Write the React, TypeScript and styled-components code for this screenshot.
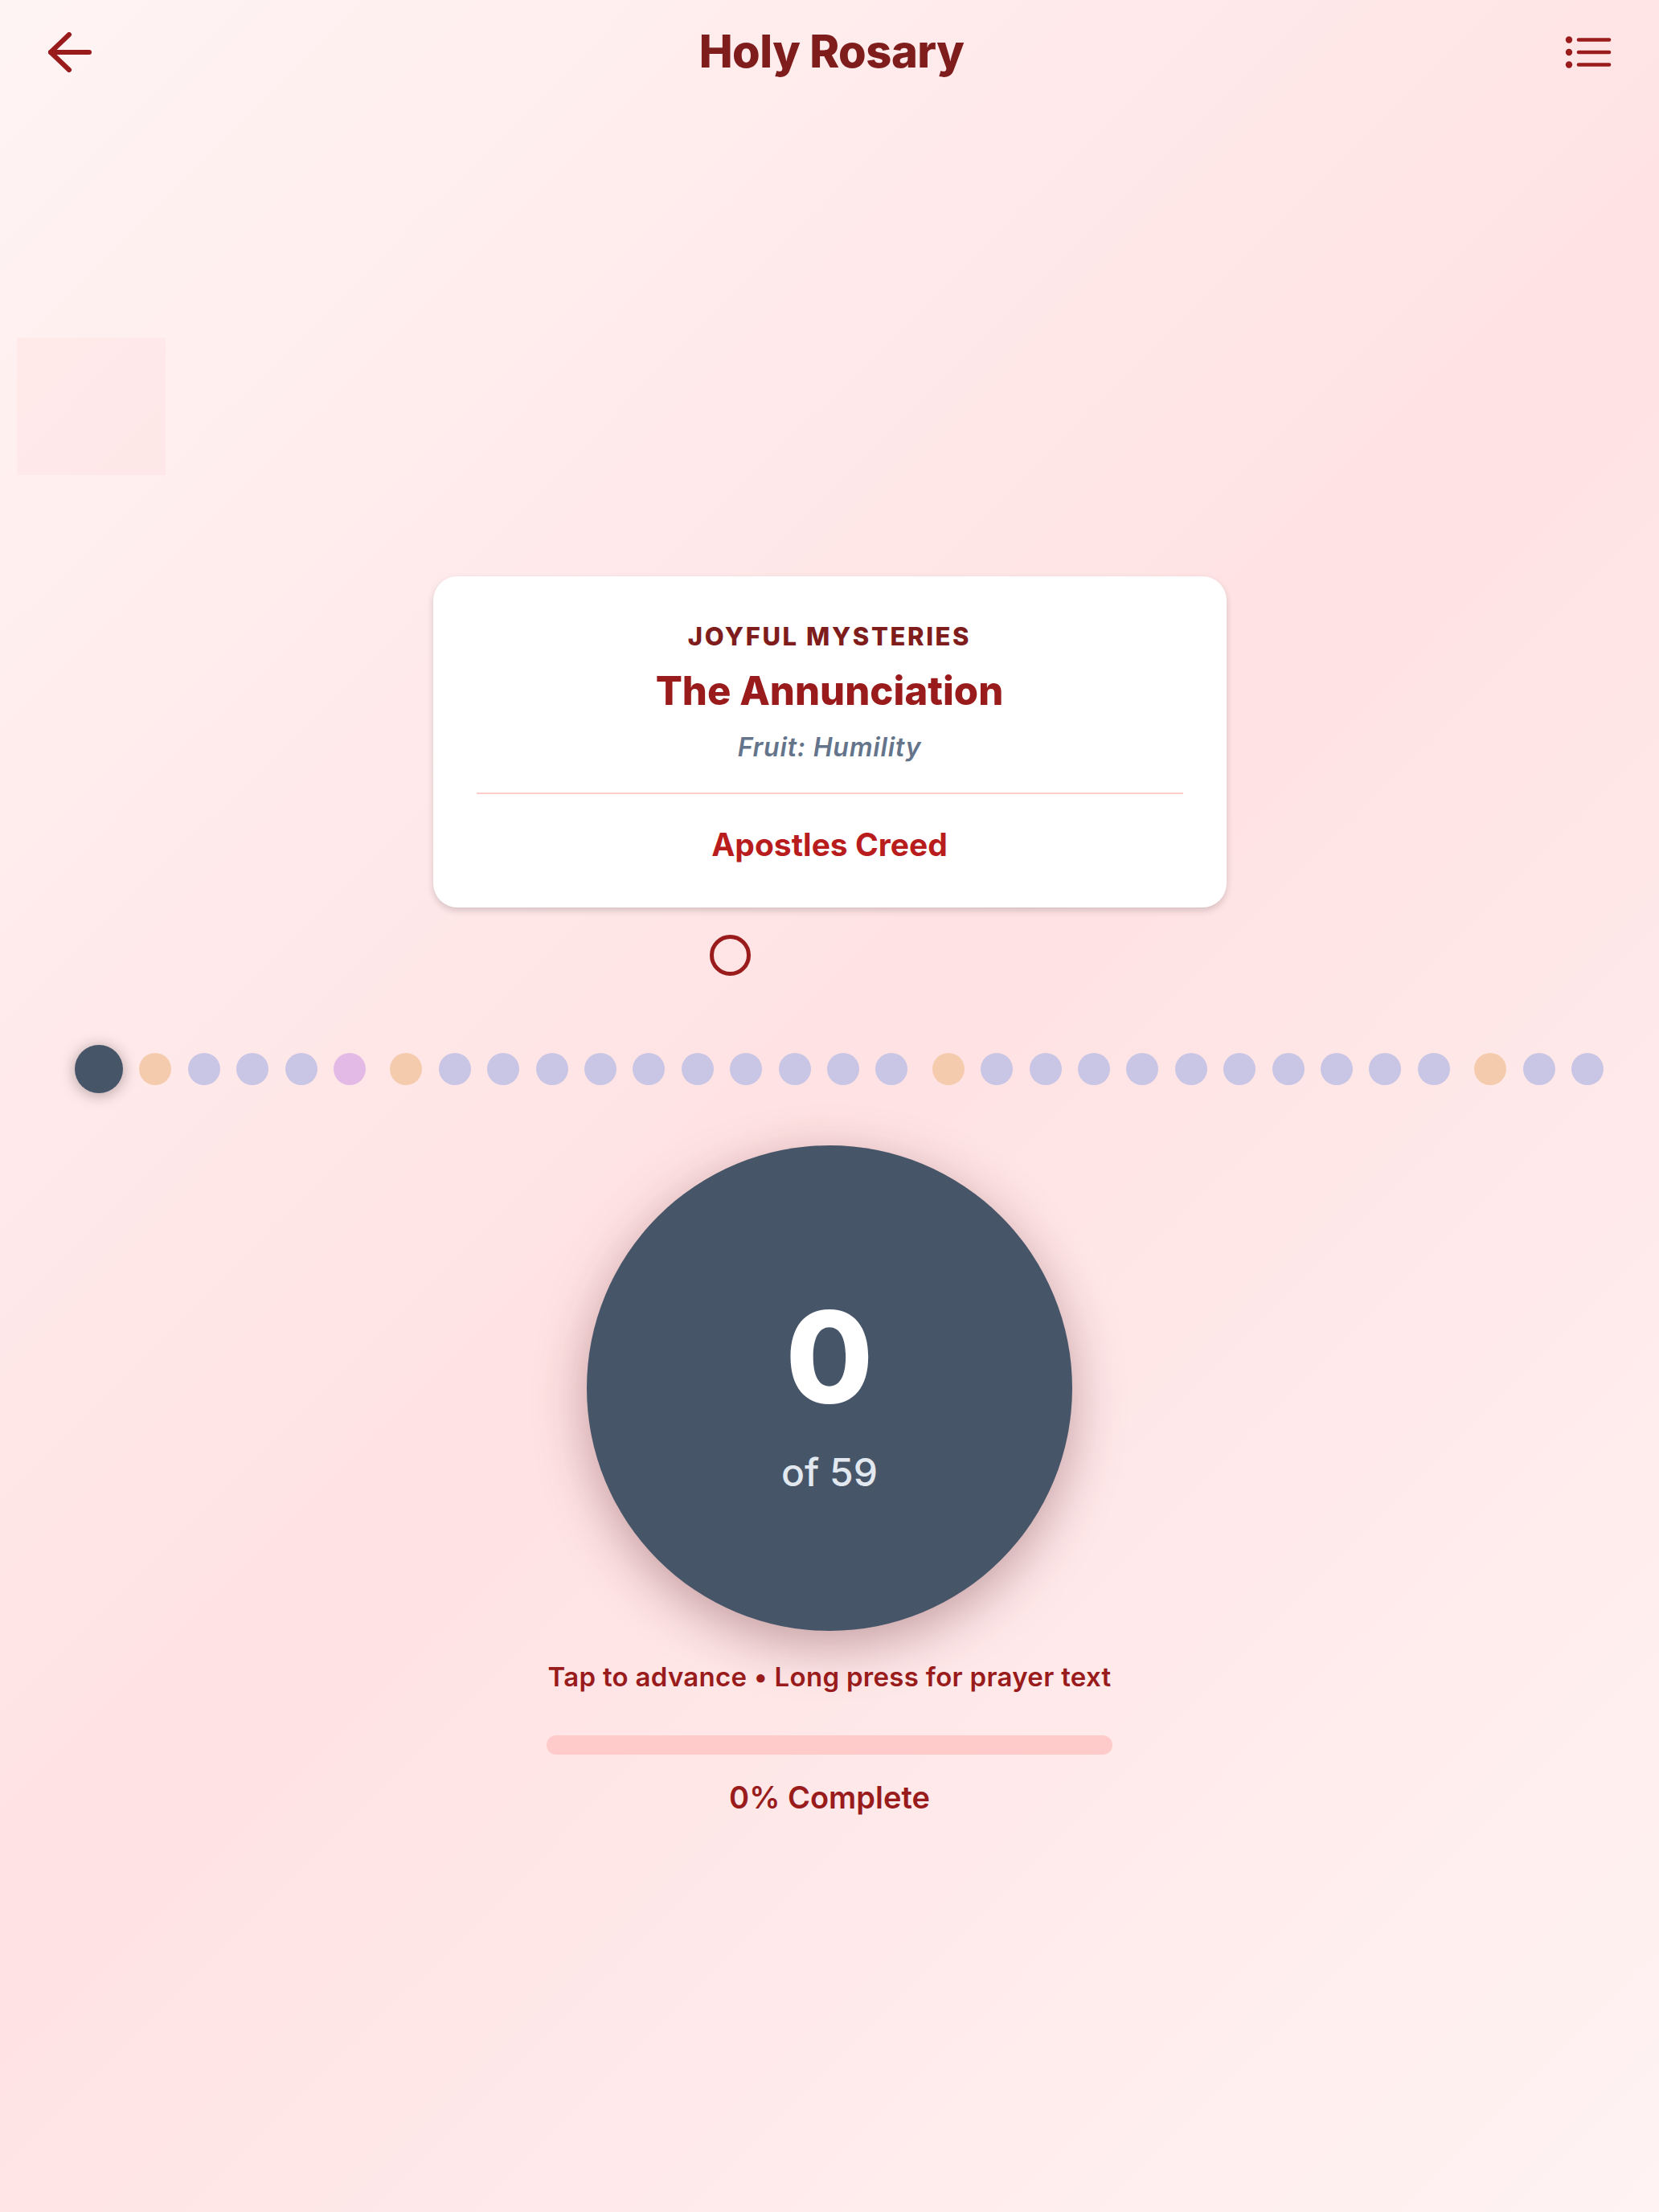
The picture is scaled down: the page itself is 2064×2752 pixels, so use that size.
import styled, { createGlobalStyle } from "styled-components"

type BeadKind = "cross" | "ourFather" | "hailMary" | "gloryBe"

const GlobalStyle = createGlobalStyle`
  html, body {
    margin: 0;
    padding: 0;
  }
  body {
    font-family: Inter, "Noto Sans", "Liberation Sans", sans-serif;
    -webkit-font-smoothing: antialiased;
  }
  * {
    box-sizing: border-box;
  }
`

const beadColors: Record<BeadKind, string> = {
  cross: "#475569",
  ourFather: "#f5cbae",
  hailMary: "#c8c5e5",
  gloryBe: "#e3bae6",
}

// intro: crucifix, Our Father, three Hail Marys, Glory Be; then five decades
const beadGroups: BeadKind[][] = [
  ["cross", "ourFather", "hailMary", "hailMary", "hailMary", "gloryBe"],
  ...Array.from({ length: 5 }, () => [
    "ourFather" as BeadKind,
    ...Array.from({ length: 10 }, () => "hailMary" as BeadKind),
  ]),
]

const Page = styled.div`
  width: 2064px;
  min-height: 2752px;
  display: flex;
  flex-direction: column;
  align-items: center;
  background: linear-gradient(135deg, #fff4f4 0%, #ffe2e3 50%, #fff3f3 100%);
`

const Header = styled.header`
  width: 100%;
  height: 130px;
  display: grid;
  grid-template-columns: 1fr auto 1fr;
  align-items: center;
  padding: 0 54px 0 59px;
`

const IconButton = styled.button<{ $align: "start" | "end" }>`
  justify-self: ${(p) => p.$align};
  display: flex;
  align-items: center;
  justify-content: center;
  padding: 0;
  border: none;
  background: none;
  color: #991b1b;
  cursor: pointer;
`

const Title = styled.h1`
  margin: 0;
  font-size: 56px;
  font-weight: 800;
  line-height: 1.2;
  letter-spacing: -0.5px;
  color: #7f1d1d;
`

const GhostTile = styled.div`
  align-self: flex-start;
  width: 185px;
  height: 171px;
  margin: 290px 0 0 21px;
  background: rgba(253, 205, 205, 0.2);
`

const MysteryCard = styled.section`
  width: 987px;
  margin-top: 126px;
  padding: 57px 54px 55px;
  display: flex;
  flex-direction: column;
  align-items: center;
  background: #ffffff;
  border-radius: 30px;
  box-shadow: 0 4px 8px rgba(0, 0, 0, 0.16);
  text-align: center;
`

const MysteryGroup = styled.div`
  font-size: 31px;
  line-height: 36px;
  font-weight: 800;
  letter-spacing: 2.6px;
  color: #7f1d1d;
`

const MysteryName = styled.h2`
  margin: 21px 0 0;
  font-size: 49px;
  line-height: 58px;
  font-weight: 800;
  color: #991b1b;
`

const Fruit = styled.div`
  margin-top: 23px;
  font-size: 32px;
  line-height: 36px;
  font-style: italic;
  font-weight: 600;
  letter-spacing: 0.8px;
  color: #64748b;
`

const Divider = styled.hr`
  width: 100%;
  margin: 38px 0 0;
  border: none;
  border-top: 2px solid #fecaca;
`

const PrayerName = styled.div`
  margin-top: 40px;
  font-size: 39px;
  line-height: 46px;
  font-weight: 700;
  color: #b91c1c;
`

const Pendant = styled.div`
  width: 51px;
  height: 51px;
  margin: 34px 248px 0 0;
  border: 5px solid #991b1b;
  border-radius: 50%;
`

const BeadTrack = styled.div`
  align-self: flex-start;
  width: 1966px;
  margin: 56px 0 0 40px;
  padding: 30px 0 30px 53px;
  display: flex;
  align-items: center;
  gap: 30.5px;
  overflow: hidden;
`

const BeadGroup = styled.div`
  display: flex;
  align-items: center;
  gap: 20.4px;
  flex-shrink: 0;
`

const Bead = styled.div<{ $kind: BeadKind }>`
  flex-shrink: 0;
  width: ${(p) => (p.$kind === "cross" ? 60 : 40)}px;
  height: ${(p) => (p.$kind === "cross" ? 60 : 40)}px;
  border-radius: 50%;
  background: ${(p) => beadColors[p.$kind]};
  box-shadow: ${(p) => (p.$kind === "cross" ? "0 2px 18px rgba(30, 20, 30, 0.35)" : "none")};
`

const Counter = styled.button`
  width: 604px;
  height: 604px;
  margin-top: 35px;
  padding: 184px 0 0;
  display: flex;
  flex-direction: column;
  align-items: center;
  border: none;
  border-radius: 50%;
  background: #475569;
  box-shadow: 0 18px 64px rgba(90, 30, 40, 0.36);
  font-family: inherit;
  cursor: pointer;
`

const Count = styled.div`
  font-size: 158px;
  line-height: 158px;
  font-weight: 800;
  color: #ffffff;
`

const Total = styled.div`
  margin-top: 37px;
  font-size: 48px;
  line-height: 55px;
  font-weight: 500;
  color: #e2e8f0;
`

const Hint = styled.p`
  margin: 37px 0 0;
  font-size: 33px;
  line-height: 40px;
  font-weight: 600;
  letter-spacing: 0.3px;
  color: #991b1b;
`

const ProgressTrack = styled.div`
  width: 704px;
  height: 24px;
  margin-top: 53px;
  border-radius: 12px;
  background: #fecaca;
  overflow: hidden;
`

const ProgressFill = styled.div`
  height: 100%;
  background: #b91c1c;
`

const ProgressLabel = styled.div`
  margin-top: 30px;
  font-size: 38px;
  line-height: 46px;
  font-weight: 600;
  color: #991b1b;
`

function BackArrow() {
  return (
    <svg width="56" height="50" viewBox="0 0 56 50" fill="none" stroke="currentColor" strokeWidth="6" strokeLinecap="round" strokeLinejoin="round" aria-hidden>
      <path d="M27 3 4 25l23 22" />
      <path d="M4 25h48" />
    </svg>
  )
}

function ListIcon() {
  return (
    <svg width="64" height="44" viewBox="0 0 64 44" fill="none" aria-hidden>
      <g fill="currentColor">
        <circle cx="6" cy="6.5" r="4.2" />
        <circle cx="6" cy="22" r="4.2" />
        <circle cx="6" cy="37.5" r="4.2" />
      </g>
      <g stroke="currentColor" strokeWidth="4.6" strokeLinecap="round">
        <path d="M18 6.5h38" />
        <path d="M18 22h38" />
        <path d="M18 37.5h38" />
      </g>
    </svg>
  )
}

export default function App() {
  const current = 0
  const total = 59
  const percent = Math.round((current / total) * 100)

  return (
    <>
      <GlobalStyle />
      <Page>
        <Header>
          <IconButton $align="start" aria-label="Back">
            <BackArrow />
          </IconButton>
          <Title>Holy Rosary</Title>
          <IconButton $align="end" aria-label="Prayer list">
            <ListIcon />
          </IconButton>
        </Header>

        <GhostTile />

        <MysteryCard>
          <MysteryGroup>JOYFUL MYSTERIES</MysteryGroup>
          <MysteryName>The Annunciation</MysteryName>
          <Fruit>Fruit: Humility</Fruit>
          <Divider />
          <PrayerName>Apostles Creed</PrayerName>
        </MysteryCard>

        <Pendant />

        <BeadTrack>
          {beadGroups.map((group, gi) => (
            <BeadGroup key={gi}>
              {group.map((kind, bi) => (
                <Bead key={bi} $kind={kind} />
              ))}
            </BeadGroup>
          ))}
        </BeadTrack>

        <Counter aria-label="Advance">
          <Count>{current}</Count>
          <Total>of {total}</Total>
        </Counter>

        <Hint>Tap to advance • Long press for prayer text</Hint>

        <ProgressTrack>
          <ProgressFill style={{ width: `${percent}%` }} />
        </ProgressTrack>
        <ProgressLabel>{percent}% Complete</ProgressLabel>
      </Page>
    </>
  )
}
